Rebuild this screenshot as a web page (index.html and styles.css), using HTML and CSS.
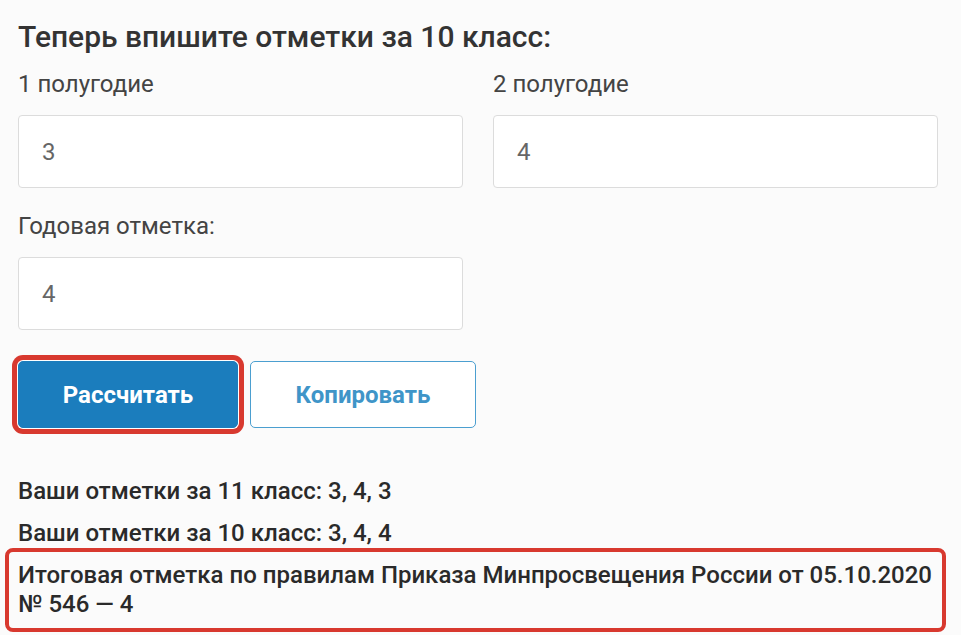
FILE: index.html
```html
<!DOCTYPE html>
<html lang="ru">
<head>
  <meta charset="UTF-8" />
  <meta name="viewport" content="width=device-width, initial-scale=1" />
  <title>Калькулятор итоговой отметки</title>
  <link rel="stylesheet" href="styles.css">
</head>
<body>
  <div class="calc">
    <h2 class="calc-title">Теперь впишите отметки за 10 класс:</h2>
    <div class="calc-row">
      <div class="field">
        <label class="field-label" for="half1">1 полугодие</label>
        <input class="field-input" type="text" id="half1" value="3" />
      </div>
      <div class="field">
        <label class="field-label" for="half2">2 полугодие</label>
        <input class="field-input" type="text" id="half2" value="4" />
      </div>
    </div>
    <div class="calc-row">
      <div class="field">
        <label class="field-label" for="year">Годовая отметка:</label>
        <input class="field-input" type="text" id="year" value="4" />
      </div>
    </div>
    <div class="calc-actions">
      <button class="btn btn-primary marked">Рассчитать</button>
      <button class="btn btn-outline">Копировать</button>
    </div>
    <div class="calc-result">
      <p class="result-line">Ваши отметки за 11 класс: 3, 4, 3</p>
      <p class="result-line">Ваши отметки за 10 класс: 3, 4, 4</p>
      <p class="result-line result-final">Итоговая отметка по правилам Приказа Минпросвещения России от 05.10.2020 № 546 — 4</p>
    </div>
  </div>
</body>
</html>
```

FILE: styles.css
```css
body {
  margin: 0;
  padding: 0;
  background-color: #fbfbfb;
  font-family: Roboto, "Noto Sans", Arial, sans-serif;
  color: #333;
}
.calc {
  width: 920px;
  padding: 19px 0 0 18px;
}
.calc-title {
  margin: 0 0 15px;
  font-size: 30px;
  font-weight: 500;
  line-height: 36px;
  color: #333;
}
.calc-row {
  display: grid;
  grid-template-columns: 445px 445px;
  column-gap: 30px;
  margin-bottom: 24px;
}
.field-label {
  display: block;
  font-size: 24px;
  line-height: 28px;
  color: #444;
  margin-bottom: 17px;
}
.field-input {
  display: block;
  width: 100%;
  height: 73px;
  box-sizing: border-box;
  padding: 0 23px;
  border: 1px solid #dcdcdc;
  border-radius: 4px;
  background: #fff;
  font-family: inherit;
  font-size: 24px;
  color: #666;
  outline: none;
}
.calc-actions {
  display: flex;
  gap: 12px;
  margin-top: 31px;
  margin-bottom: 49px;
}
.btn {
  height: 67px;
  border-radius: 5px;
  font-family: inherit;
  font-size: 24px;
  font-weight: 700;
  cursor: pointer;
}
.btn-primary {
  width: 220px;
  background-color: #1b7dbd;
  border: 1px solid #1b7dbd;
  color: #fff;
}
.btn-outline {
  width: 226px;
  background-color: #fff;
  border: 1px solid #4b9fd0;
  color: #3f95c8;
}
.marked {
  box-shadow: 0 0 0 1px #fff, 0 0 0 6px #d8392f;
}
.result-line {
  margin: 0 0 14px;
  font-size: 24px;
  font-weight: 500;
  line-height: 28px;
  color: #2a2a2a;
}
.result-final {
  margin: -13px 0 0 -13px;
  padding: 9px 4px 9px 9px;
  width: 941px;
  box-sizing: border-box;
  border: 4px solid #d8392f;
  border-radius: 8px;
  line-height: 29px;
}
```
